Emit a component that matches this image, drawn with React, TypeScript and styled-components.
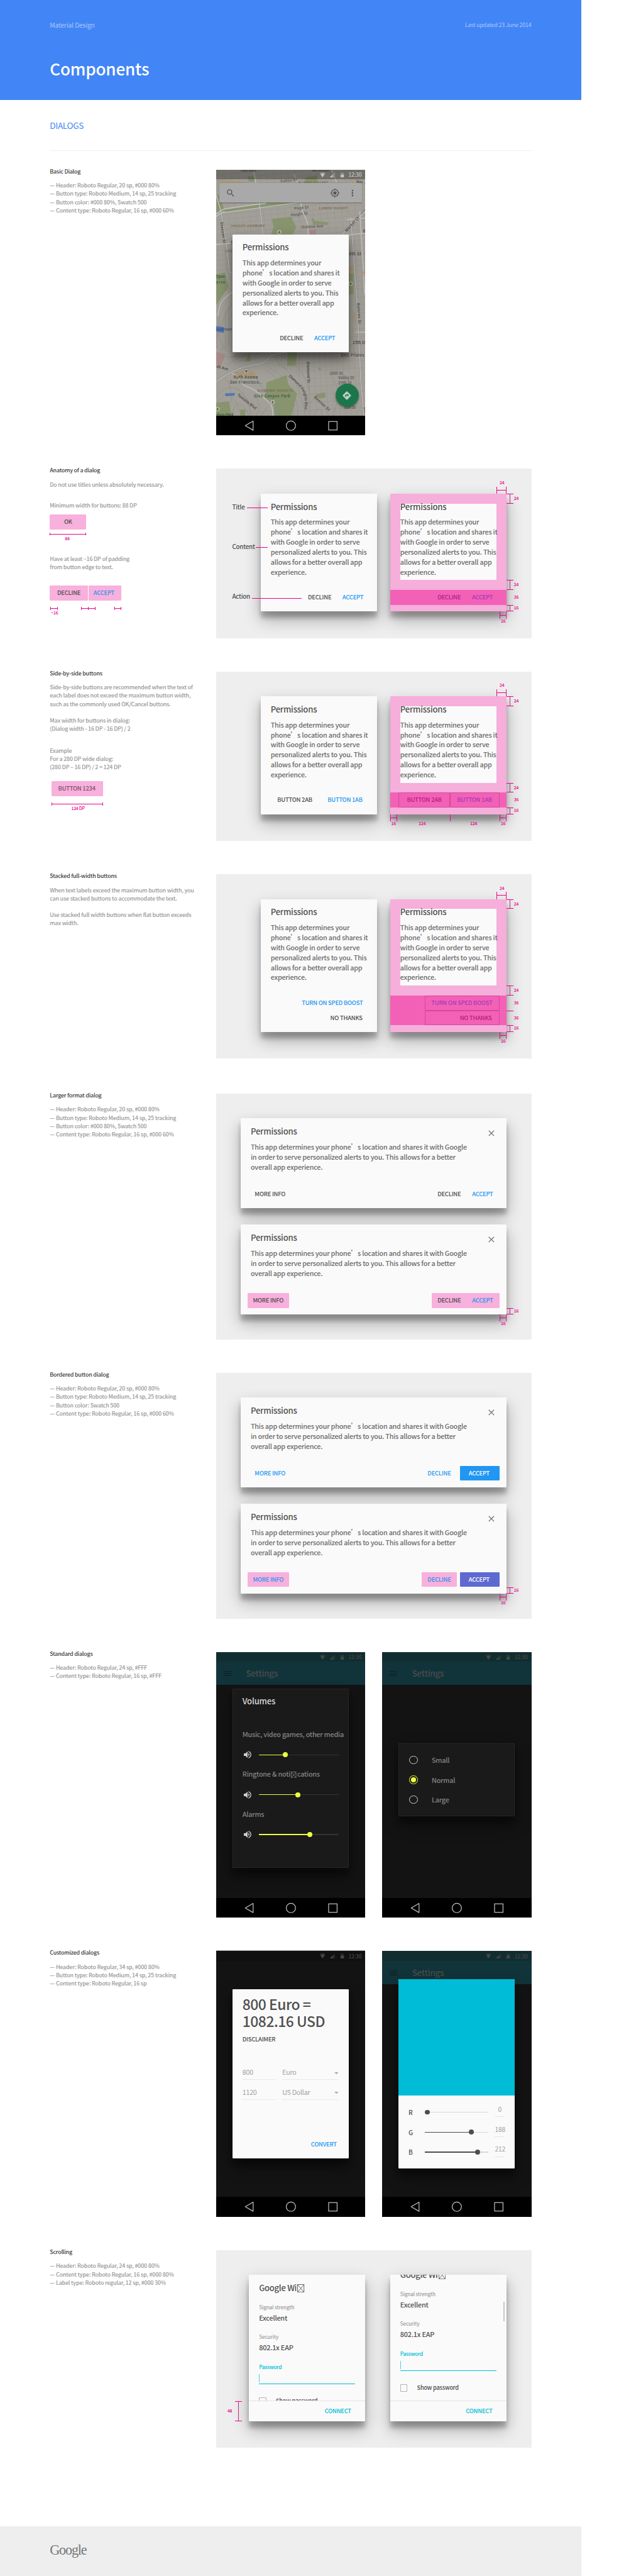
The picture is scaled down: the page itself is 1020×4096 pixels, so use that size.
import React from 'react';
import styled, { createGlobalStyle, css } from 'styled-components';
import {
  MdSearch,
  MdGpsFixed,
  MdMoreVert,
  MdDirections,
  MdVolumeUp,
  MdMenu,
  MdClose,
} from 'react-icons/md';

/* 1rem is ten units of the spec sheet grid */
const Global = createGlobalStyle`
  html { font-size: 6.6063px; }
  body { margin: 0; background: #fff; }
  * { box-sizing: border-box; }
  p, h1, h2, h3, ul { margin: 0; padding: 0; font-weight: inherit; }
  svg { display: block; }
`;

const PINK = '#ec008c';
const BLUE = '#2196f3';
const INK = '#4d4d4d';

const Page = styled.div`
  width: 154.4rem;
  height: 620rem;
  display: flex;
  flex-direction: column;
  align-items: flex-start;
  overflow: hidden;
  font-family: 'Noto Sans CJK SC', 'Noto Sans', sans-serif;
  font-weight: 500;
  letter-spacing: -0.035em;
  color: ${INK};
`;

/* ---------- page frame ---------- */

const Header = styled.header`
  width: 140rem;
  height: 24rem;
  padding: 4.96rem 12rem 0;
  background: #4285f6;
  color: #fff;
  display: flex;
  flex-direction: column;
  justify-content: flex-start;
`;
const HeaderRow = styled.div`
  display: flex;
  justify-content: space-between;
  color: #a9c8fb;
  line-height: 2rem;
  font-weight: 400;
  letter-spacing: -0.024em;
`;
const Product = styled.span`
  font-size: 1.56rem;
  position: relative;
  top: 0.05rem;
`;
const Updated = styled.span`
  font-size: 1.344rem;
`;
const PageTitle = styled.h1`
  font-size: 3.96rem;
  line-height: 5rem;
  margin-top: 7.15rem;
`;
const Chapter = styled.div`
  width: 116rem;
  height: 12.35rem;
  margin: 0 0 4.45rem 12rem;
  padding-top: 5.1rem;
  border-bottom: 1px solid #eee;
`;
const ChapterTitle = styled.h2`
  font-size: 2.05rem;
  font-weight: 400;
  letter-spacing: -0.024em;
  line-height: 2.2rem;
  color: #4285f6;
`;
const Sections = styled.main`
  display: flex;
  flex-direction: column;
  gap: 8rem;
  padding-left: 12rem;
`;
const Section = styled.section<{ $mt?: number }>`
  display: grid;
  grid-template-columns: 40rem 76rem;
  margin-top: ${(p) => p.$mt ?? 0}rem;
`;
const Aside = styled.div`
  margin-top: -0.58rem;
  height: 0;
  display: flex;
  flex-direction: column;
  align-items: flex-start;
  font-size: 1.357rem;
  line-height: 2rem;
  color: #999;
  white-space: nowrap;
  & > * {
    flex-shrink: 0;
  }
`;
const AsideTitle = styled.h3`
  font-size: 1.35rem;
  line-height: 2rem;
  color: #3d3d3d;
  margin-bottom: 1.4rem;
`;
const Note = styled.p<{ $gap?: number }>`
  line-height: 2rem;
  margin-top: ${(p) => p.$gap ?? 0}rem;
`;
const Footer = styled.footer`
  width: 140rem;
  height: 12rem;
  margin-top: auto;
  padding: 3.8rem 12rem 0;
  background: #eee;
`;
const Wordmark = styled.div`
  font-family: 'Liberation Serif', serif;
  font-size: 3.35rem;
  font-weight: 400;
  line-height: 4rem;
  letter-spacing: -0.052em;
  color: #777;
`;

/* ---------- dialogs ---------- */

const Stage = styled.div<{ $h: number }>`
  position: relative;
  height: ${(p) => p.$h}rem;
  background: #eee;
  overflow: hidden;
`;
const DialogRow = styled.div<{ $left: number; $gap: number }>`
  display: flex;
  gap: ${(p) => p.$gap}rem;
  padding: 6rem 0 0 ${(p) => p.$left}rem;
`;
const DialogStack = styled.div`
  display: flex;
  flex-direction: column;
  gap: 4rem;
  padding: 6rem 0 0 6rem;
`;
const raised = css`
  box-shadow: 0 1.5rem 1.2rem rgba(0, 0, 0, 0.24), 0 1.9rem 3.8rem rgba(0, 0, 0, 0.3);
`;
const Dialog = styled.div<{ $w?: number; $h: number; $marked?: boolean }>`
  width: ${(p) => p.$w ?? 28}rem;
  height: ${(p) => p.$h}rem;
  display: flex;
  flex-direction: column;
  padding: 2.4rem 0 1.6rem;
  border-radius: 0.2rem;
  background: ${(p) => (p.$marked ? '#f6aedb' : '#fafafa')};
  ${raised}
`;
const DialogText = styled.div<{ $fixed?: boolean }>`
  display: flex;
  flex-direction: column;
  margin: 0 2.4rem;
  height: ${(p) => (p.$fixed ? '18.4rem' : 'auto')};
  background: #fafafa;
`;
const TitleLine = styled.div`
  display: flex;
  justify-content: space-between;
  margin-top: -0.47rem;
  height: 2.4rem;
`;
const DialogTitle = styled.h3`
  font-size: 1.99rem;
  line-height: 2.4rem;
  color: #505050;
`;
const DialogBody = styled.p`
  margin-top: 1.36rem;
  font-size: 1.635rem;
  line-height: 2.4rem;
  color: #6c6c6c;
  white-space: nowrap;
`;
const Close = styled(MdClose)`
  width: 2.4rem;
  height: 2.4rem;
  margin: 0.5rem 0.1rem 0 0;
  color: #757575;
`;
const Actions = styled.div<{ $tinted?: boolean; $stacked?: boolean }>`
  margin-top: auto;
  padding: 0 1.6rem;
  display: flex;
  flex-direction: ${(p) => (p.$stacked ? 'column' : 'row')};
  align-items: ${(p) => (p.$stacked ? 'flex-end' : 'stretch')};
  justify-content: flex-end;
  background: ${(p) => (p.$tinted ? '#f361b7' : 'transparent')};
`;
const Spacer = styled.div`
  flex: 1;
`;

type ButtonProps = {
  $w: number;
  $tone?: string;
  $fill?: string;
  $nudge?: number;
  $ml?: number;
  $outlined?: boolean;
};
const Button = styled.div<ButtonProps>`
  width: ${(p) => p.$w}rem;
  height: 3.6rem;
  margin-left: ${(p) => p.$ml ?? 0}rem;
  padding-right: ${(p) => p.$nudge ?? 0}rem;
  border-radius: 0.2rem;
  background: ${(p) => p.$fill ?? 'transparent'};
  box-shadow: ${(p) => (p.$outlined ? 'inset 0 0 0 1px #d4479c' : 'none')};
  color: ${(p) => p.$tone ?? INK};
  font-size: 1.42rem;
  line-height: 3.6rem;
  text-align: center;
  white-space: nowrap;
`;
const EndButton = styled(Button)`
  padding-right: 1.9rem;
  text-align: right;
`;

/* ---------- measurement annotations ---------- */

const Across = styled.div<{ $x: number; $y: number; $w: number; $h: number; $bare?: boolean }>`
  position: absolute;
  left: ${(p) => p.$x}rem;
  top: ${(p) => p.$y}rem;
  width: ${(p) => p.$w}rem;
  height: ${(p) => p.$h}rem;
  border-left: 1px solid ${PINK};
  border-right: ${(p) => (p.$bare ? 'none' : `1px solid ${PINK}`)};
  &::before {
    content: '';
    position: absolute;
    left: 0;
    right: 0;
    top: calc(50% - 0.5px);
    height: 1px;
    background: ${PINK};
    display: ${(p) => (p.$bare ? 'none' : 'block')};
  }
`;
const Down = styled.div<{ $x: number; $y: number; $h: number }>`
  position: absolute;
  left: ${(p) => p.$x}rem;
  top: ${(p) => p.$y}rem;
  width: 1.7rem;
  height: ${(p) => p.$h}rem;
  border-top: 1px solid ${PINK};
  border-bottom: 1px solid ${PINK};
  &::before {
    content: '';
    position: absolute;
    left: calc(50% - 0.5px);
    top: 0;
    bottom: 0;
    width: 1px;
    background: #c4267f;
  }
`;
const Tick = styled.div<{ $x: number; $y: number; $w: number }>`
  position: absolute;
  left: ${(p) => p.$x}rem;
  top: ${(p) => p.$y}rem;
  width: ${(p) => p.$w}rem;
  height: 1px;
  background: ${PINK};
`;
const Figure = styled.span<{ $x: number; $y: number }>`
  position: absolute;
  left: ${(p) => p.$x - 3}rem;
  top: ${(p) => p.$y - 0.6}rem;
  width: 6rem;
  text-align: center;
  font-size: 1.04rem;
  line-height: 1.2rem;
  color: ${PINK};
`;
const PartLabel = styled.span<{ $y: number }>`
  position: absolute;
  left: 3.92rem;
  top: ${(p) => p.$y - 1.65}rem;
  font-size: 1.49rem;
  line-height: 2rem;
  color: #4d4d4d;
`;

const MarginTop = () => (
  <>
    <Across $x={67.6} $y={4.3} $w={2.4} $h={1.7} />
    <Figure $x={68.9} $y={3.45}>24</Figure>
    <Down $x={70} $y={6} $h={2.4} />
    <Figure $x={72.35} $y={7.2}>24</Figure>
  </>
);
const CornerMark = ({ y }: { y: number }) => (
  <>
    <Down $x={70} $y={y - 1.6} $h={1.6} />
    <Figure $x={72.35} $y={y - 0.85}>16</Figure>
    <Across $x={68.4} $y={y} $w={1.6} $h={1.7} />
    <Figure $x={69.2} $y={y + 2.3}>16</Figure>
  </>
);

/* measurement strip that sits below the sample buttons of the left column */
const Strip = styled.div<{ $h: number; $w: number; $ml?: number }>`
  position: relative;
  width: ${(p) => p.$w}rem;
  height: ${(p) => p.$h}rem;
  margin-left: ${(p) => p.$ml ?? 0}rem;
`;
const Samples = styled.div<{ $gap: number; $ml?: number }>`
  display: flex;
  gap: 0.1rem;
  margin: ${(p) => p.$gap}rem 0 0 ${(p) => p.$ml ?? 0}rem;
`;

const NarrowText = ({ fixed }: { fixed?: boolean }) => (
  <DialogText $fixed={fixed}>
    <TitleLine>
      <DialogTitle>Permissions</DialogTitle>
    </TitleLine>
    <DialogBody>
      This app determines your
      <br />
      phone’s location and shares it
      <br />
      with Google in order to serve
      <br />
      personalized alerts to you. This
      <br />
      allows for a better overall app
      <br />
      experience.
    </DialogBody>
  </DialogText>
);
const WideText = () => (
  <DialogText>
    <TitleLine>
      <DialogTitle>Permissions</DialogTitle>
      <Close />
    </TitleLine>
    <DialogBody>
      This app determines your phone’s location and shares it with Google
      <br />
      in order to serve personalized alerts to you. This allows for a better
      <br />
      overall app experience.
    </DialogBody>
  </DialogText>
);

/* ---------- phones ---------- */

const Phones = styled.div`
  display: flex;
  gap: 4rem;
`;
const Phone = styled.div<{ $edge?: boolean }>`
  position: relative;
  width: 36rem;
  height: 64rem;
  background: #131313;
  overflow: hidden;
  display: flex;
  flex-direction: column;
  box-shadow: ${(p) => (p.$edge ? '0 -1px 0 #aaa' : 'none')};
`;
const StatusBar = styled.div<{ $bg: string; $fg: string }>`
  position: relative;
  height: 2.4rem;
  flex: none;
  display: flex;
  align-items: center;
  justify-content: flex-end;
  gap: 1rem;
  padding-right: 0.9rem;
  background: ${(p) => p.$bg};
  color: ${(p) => p.$fg};
  font-size: 1.3rem;
  line-height: 2.3rem;
`;
const StatusIcons = styled.svg`
  width: 6rem;
  height: 1.4rem;
`;
const AppBar = styled.div`
  height: 5.6rem;
  flex: none;
  padding-left: 1.6rem;
  display: flex;
  align-items: center;
  gap: 3.25rem;
  background: #10343a;
  color: #4b4b4b;
  font-size: 2.04rem;
  line-height: 2.4rem;
`;
const MenuIcon = styled(MdMenu)`
  width: 2.4rem;
  height: 2.4rem;
  color: #0f2023;
`;
const Screen = styled.div`
  flex: 1;
`;
const NavBar = styled.div`
  position: relative;
  height: 4.8rem;
  flex: none;
  background: #000;
`;
const NavIcons = styled.svg`
  width: 36rem;
  height: 4.8rem;
`;
const Window = styled.div<{ $top: number; $h: number; $dark?: boolean }>`
  position: absolute;
  left: 4rem;
  top: ${(p) => p.$top}rem;
  width: 28rem;
  height: ${(p) => p.$h}rem;
  display: flex;
  flex-direction: column;
  border-radius: 0.2rem;
  background: ${(p) => (p.$dark ? '#1a1a1a' : '#fafafa')};
  box-shadow: ${(p) => (p.$dark ? 'inset 0 0 0 1px #262626, ' : '')} 0 1.5rem 1.2rem
      rgba(0, 0, 0, 0.24),
    0 1.9rem 3.8rem rgba(0, 0, 0, 0.45);
`;
const PhoneDialog = styled(Dialog)`
  position: absolute;
  left: 4rem;
  top: 15.6rem;
  box-shadow: 0 1.5rem 1.2rem rgba(0, 0, 0, 0.26), 0 1.9rem 3.8rem rgba(0, 0, 0, 0.4);
`;

const Status = ({ bg, fg, dim }: { bg: string; fg: string; dim: string }) => (
  <StatusBar $bg={bg} $fg={fg}>
    <StatusIcons viewBox="0 0 60 14">
      <path d="M1 3.5Q8 -2 15 3.5L8 13.5Z" fill={dim} />
      <path d="M3.2 6Q8 2.6 12.8 6L8 13.5Z" fill={fg} />
      <path d="M37.5 1.5V13.5H25.5Z" fill={dim} />
      <path d="M32.2 7V13.5H25.5Z" fill={fg} />
      <path d="M54 1.5H57V3H59.5V13.5H51.5V3H54Z" fill={dim} />
      <path d="M51.5 7.4H59.5V13.5H51.5Z" fill={fg} />
    </StatusIcons>
    12:30
  </StatusBar>
);
const Nav = () => (
  <NavBar>
    <NavIcons viewBox="0 0 360 48" fill="none" stroke="#c4c4c4" strokeWidth="1.8">
      <path d="M89 13V35L70 24Z" strokeLinejoin="round" />
      <circle cx="180" cy="24" r="11.2" />
      <rect x="270.9" y="14" width="20.4" height="20.4" />
    </NavIcons>
  </NavBar>
);

/* map */
const MapLayer = styled.svg`
  position: absolute;
  left: 0;
  top: 0;
  width: 36rem;
  height: 59.2rem;
  font-family: Roboto, sans-serif;
  letter-spacing: 0;
`;
const SearchCard = styled.div`
  position: relative;
  height: 4.8rem;
  margin: 0.8rem 0.8rem 0;
  padding: 0 1.1rem 0 1.6rem;
  display: flex;
  align-items: center;
  background: #a9a9a9;
  border-radius: 0.2rem;
  box-shadow: 0 0.1rem 0.2rem rgba(0, 0, 0, 0.35);
  color: #555;
  svg {
    width: 2.4rem;
    height: 2.4rem;
  }
`;
const SearchGap = styled.div`
  flex: 1;
`;
const Locate = styled(MdGpsFixed)`
  margin-right: 1.9rem;
`;
const Fab = styled.div`
  position: absolute;
  left: 28.8rem;
  top: 51.6rem;
  width: 5.6rem;
  height: 5.6rem;
  border-radius: 50%;
  background: #1d754c;
  color: #b9cfc4;
  display: grid;
  place-items: center;
  box-shadow: 0 0.3rem 0.5rem rgba(0, 0, 0, 0.35);
  svg {
    width: 2.4rem;
    height: 2.4rem;
  }
`;

const TreePin = ({ x, y }: { x: number; y: number }) => (
  <g transform={`translate(${x} ${y})`}>
    <circle r="6" fill="#b9b9b5" stroke="#77756e" strokeWidth=".8" />
    <path d="M0 -4L3.4 1.6H1V3.6H-1V1.6H-3.4Z" fill="#4f7a1a" />
  </g>
);
const FoodPin = ({ x, y }: { x: number; y: number }) => (
  <g transform={`translate(${x} ${y})`}>
    <circle r="6" fill="#b9b9b5" stroke="#77756e" strokeWidth=".8" />
    <path d="M-2.6 -3.5V-.6Q-2.6 .6 -1.4 .6Q-.2 .6 -.2 -.6V-3.5M-1.4 -3.5V4M2 4V-3.5Q3.6 -2 2 .4" stroke="#c96a10" strokeWidth="1" fill="none" />
  </g>
);

const MapView = () => (
  <MapLayer viewBox="0 0 360 592">
    <defs>
      <pattern id="blocks" width="17" height="12" patternUnits="userSpaceOnUse" patternTransform="rotate(-6)">
        <path d="M0 0H17M0 0V12" stroke="#8b8984" strokeWidth="1" fill="none" />
      </pattern>
      <pattern id="blocks2" width="14" height="19" patternUnits="userSpaceOnUse" patternTransform="rotate(-3)">
        <path d="M0 0H14M0 0V19" stroke="#8b8984" strokeWidth="1" fill="none" />
      </pattern>
      <path id="dhb" d="M174 498C192 512 206 526 211 540C215 552 214 562 212 580" />
    </defs>
    <rect width="360" height="592" fill="#a29f98" />
    <path d="M0 0H360V250H0Z" fill="url(#blocks)" />
    <path d="M150 250H360V592H200L215 500L150 470Z" fill="url(#blocks2)" />
    <g fill="none" stroke="#8b8984" strokeWidth=".9">
      <path d="M8 330C22 300 30 300 40 292M4 400C14 370 22 340 40 322M6 345V400L20 430H12V452M22 340V430M30 330V420" />
      <path d="M12 300Q22 288 36 286M12 318Q20 300 38 300" />
      <path d="M30 470C60 440 80 452 110 440S140 440 150 470M44 466C70 452 80 462 100 452M20 450C40 452 60 448 84 440" />
      <path d="M0 545C20 520 50 510 80 560M4 560C20 530 40 530 60 590M40 592C40 560 60 550 80 592M20 500Q40 520 36 560" />
      <path d="M84 592C80 560 70 545 50 525M96 592C110 570 100 560 96 545M108 592Q120 575 124 570" />
      <path d="M130 478C150 490 170 500 180 530C190 550 200 560 196 592M120 480C140 500 160 505 190 570M150 470C180 480 200 520 216 592M160 450C190 470 210 480 224 530M185 592C190 560 190 540 184 520" />
      <path d="M226 560C240 540 262 560 270 592M236 592C240 570 250 570 256 592M224 470V592M280 500C300 530 292 560 282 592M200 440V500M160 440Q150 470 170 480" />
    </g>
    <g fill="#87946e">
      <path d="M134 118L180 113L193 138L180 163H129L139 139Z" />
      <path d="M230 114L238 123L269 126V133L233 132Z" />
      <path d="M0 61H8L20 98L0 105Z" />
      <path d="M12 98L100 84L200 78V82L110 92L14 104Z" />
      <path d="M100 80L180 78L150 86Z" />
      <path d="M214 18L243 14L244 32H214ZM77 16H91L92 28H78Z" />
      <path d="M0 252L21 247L30 282L6 316L0 326Z" />
      <path d="M320 250H331V300H320Z" />
      <path d="M173 439H195L191 472H170ZM70 462L80 440L84 460Z" />
      <path d="M122 512L170 494L173 517L195 539L181 592H141L138 566L117 548Z" />
      <path d="M0 561L31 557L37 592H0ZM58 577H70V592H58ZM246 476H252V481H246ZM240 540L262 536L264 548L246 550Z" />
    </g>
    <path d="M7 24L76 30L20 36H7ZM45 485H90L98 501H42ZM320 232H331V250H320ZM330 345H336V364H330Z" fill="#a8977a" />
    <path d="M225 144H241V156H225ZM0 438L22 445L10 476L0 468ZM0 380H3V430H0Z" fill="#a58a88" />
    <path d="M0 376L19 379L18 393L0 389ZM22 538L45 537L44 544L22 545Z" fill="#5377b4" />
    <path d="M97 500C108 530 124 530 134 548S150 570 152 592" fill="none" stroke="#6d86b4" strokeWidth="1.2" />
    <g fill="none" stroke="#7f7d78" strokeWidth="3.6">
      <path d="M0 61L11 98L24 178L33 248H40M104 80L113 156M324 113L339 316L349 516L356 592M303 156L360 96" />
      <path d="M0 510C40 480 60 476 110 466C124 462 125 452 132 446L173 438" />
    </g>
    <g fill="none" stroke="#bdbdbb" strokeWidth="2.4">
      <path d="M0 61L11 98L24 178L33 248H40M90 0L104 80L113 156M324 113L339 316L349 516L356 592M303 156L360 99" />
      <path d="M0 106Q10 98 20 94L120 80M10 104L199 79M0 180L40 176M0 112L20 100" />
      <path d="M188 10L194 30M204 80C206 110 218 110 220 130L222 156M346 100L358 300" />
      <path d="M0 510C40 480 60 476 110 466C124 462 125 452 132 446L173 438" />
      <path d="M39 490L56 502C62 526 84 520 100 536C122 558 138 556 136 592M40 294C10 312 8 324 4 352" />
      <path d="M335 391H360M320 157L360 152M315 120L360 116M278 0L290 30" />
    </g>
    <g fontSize="9.5" fill="#4c4b48" fontWeight="500">
      <text x="57" y="4" fill="#5d5c58">Turk Blvd</text>
      <text x="231" y="4" fill="#5d5c58">McAllister</text>
      <text transform="translate(155 31) rotate(-6)" fill="#5d5c58" textLength="40">Fulton St</text>
      <text x="338" y="33" textLength="24">Bar J</text>
      <text transform="translate(188 96) rotate(-5)" fill="#5d5c58" textLength="35">Page St</text>
      <text transform="translate(180 112) rotate(-6)" fill="#5d5c58" textLength="41">Haight St</text>
      <text transform="translate(206 141) rotate(-3)" fill="#5d5c58" textLength="52">Duboce Ave</text>
      <text transform="translate(314 150) rotate(-47)" textLength="46">Market St</text>
      <text transform="translate(10 126) rotate(82)" textLength="52">Stanyan St</text>
      <text x="36" y="178">F</text>
      <text x="354" y="151">B</text>
      <text x="320" y="206" textLength="29">6th St</text>
      <text x="358" y="204">L</text>
      <text transform="translate(339 321) rotate(86)" textLength="50">Dolores St</text>
      <text x="329" y="419" textLength="31">25th St</text>
      <text x="301" y="450" textLength="56">EHS Pilates</text>
      <text transform="translate(0 476) rotate(14)" textLength="29">de Ave</text>
      <text transform="translate(218 462) rotate(88)" textLength="51">Diamond St</text>
      <text x="42" y="503" textLength="58">Ruth Asawa</text>
      <text x="33" y="515" textLength="77">San Francisco…</text>
      <text x="273" y="493" fill="#5d5c58" textLength="32">28th St</text>
      <text x="294" y="504" fill="#5d5c58" textLength="38">Valley St</text>
      <text x="294" y="516" fill="#5d5c58" textLength="32">29th St</text>
      <text x="308" y="575" fill="#5d5c58">Gull St</text>
      <text transform="translate(50 543) rotate(38)" textLength="56">Teresita Blvd</text>
      <text transform="translate(235 548) rotate(43)" textLength="48">Beacon St</text>
      <text>
        <textPath href="#dhb" textLength="94">Diamond Heights Blvd</textPath>
      </text>
      <text transform="translate(355 572) rotate(80)">Dolores</text>
    </g>
    <g fontSize="8.6" fill="#7c6a50" fontWeight="500">
      <text x="198" y="33" textLength="72">ALAMO SQUARE</text>
      <text x="248" y="95.7" textLength="69">LOWER HAIGHT</text>
      <text x="36" y="138" textLength="81">HAIGHT-ASHBURY</text>
      <text x="22" y="199" textLength="17">COL</text>
      <text x="99" y="534.5" textLength="86">DIAMOND HEIGHTS</text>
    </g>
    <g fontSize="9.5" fill="#3c5a3a" fontStyle="italic" fontWeight="500">
      <text x="-1" y="261" textLength="22">Open</text>
      <text x="0" y="274" textLength="22">erve</text>
      <text x="91" y="548" textLength="87">Glen Canyon Park</text>
      <text x="0" y="594">dson Park</text>
      <text x="0" y="387" fill="#44567c" textLength="38">leservoir</text>
    </g>
    <TreePin x={152} y={150} />
    <TreePin x={324} y={274} />
    <TreePin x={136} y={559} />
    <TreePin x={3.5} y={576} />
    <FoodPin x={329} y={30} />
    <FoodPin x={358} y={250} />
    <g transform="translate(72.6 485)">
      <circle r="6" fill="#b9b9b5" stroke="#77756e" strokeWidth=".8" />
      <path d="M-4 -.8L0 -3L4 -.8L0 1.2ZM-2 1H2V3H-2Z" fill="#7a4030" />
    </g>
  </MapLayer>
);

/* missing-glyph box of the font's ligature */
const GlyphBox = styled.svg<{ $w: number; $h: number }>`
  display: inline-block;
  width: ${(p) => p.$w}rem;
  height: ${(p) => p.$h}rem;
  margin: 0 0.15rem 0 0.2rem;
  vertical-align: -0.16em;
`;
const Missing = ({ w, h }: { w: number; h: number }) => (
  <GlyphBox $w={w} $h={h} viewBox={`0 0 ${w * 10} ${h * 10}`} fill="none" stroke="currentColor" strokeWidth="1.3">
    <path
      d={`M.8 .8H${w * 10 - 0.8}V${h * 10 - 0.8}H.8ZM.8 .8L${w * 10 - 0.8} ${h * 10 - 0.8}M${w * 10 - 0.8} .8L.8 ${h * 10 - 0.8}`}
    />
  </GlyphBox>
);

/* sliders */
const Track = styled.div<{ $w: number; $base: string }>`
  position: relative;
  width: ${(p) => p.$w}rem;
  height: 0.2rem;
  background: ${(p) => p.$base};
`;
const Filled = styled.div<{ $ink: string; $to: number }>`
  width: ${(p) => p.$to}rem;
  height: 0.2rem;
  background: ${(p) => p.$ink};
  &::after {
    content: '';
    position: absolute;
    left: ${(p) => p.$to - 0.6}rem;
    top: -0.5rem;
    width: 1.2rem;
    height: 1.2rem;
    border-radius: 50%;
    background: ${(p) => p.$ink};
  }
`;
const VolumeTitle = styled.h3`
  margin: 1.83rem 2.4rem 5.66rem;
  font-size: 1.99rem;
  line-height: 2.4rem;
  color: #d8d8d8;
`;
const Volume = styled.div`
  height: 9.6rem;
  padding: 0 2.4rem;
`;
const VolumeName = styled.p`
  font-size: 1.635rem;
  line-height: 2.4rem;
  color: #848484;
  white-space: nowrap;
`;
const VolumeRow = styled.div`
  display: flex;
  align-items: center;
  gap: 1.6rem;
  margin-top: 2.5rem;
  height: 2.4rem;
  color: #cfcfcf;
  svg {
    width: 2.4rem;
    height: 2.4rem;
  }
`;

/* radio list */
const Options = styled(Window)`
  padding: 1.6rem 2.6rem;
`;
const Option = styled.div`
  height: 4.8rem;
  display: flex;
  align-items: center;
  gap: 3.4rem;
  font-size: 1.635rem;
  line-height: 2.2rem;
  color: #848484;
`;
const Radio = styled.span<{ $on?: boolean }>`
  width: 2rem;
  height: 2rem;
  border-radius: 50%;
  border: 0.2rem solid ${(p) => (p.$on ? '#eeff41' : '#cfcfcf')};
  display: grid;
  place-items: center;
  &::after {
    content: '';
    width: 1.1rem;
    height: 1.1rem;
    border-radius: 50%;
    background: ${(p) => (p.$on ? '#eeff41' : 'transparent')};
  }
`;

/* currency converter */
const Amount = styled.h3`
  margin: 1.5rem 2.4rem 0;
  font-size: 3.46rem;
  line-height: 4.05rem;
  letter-spacing: -0.021em;
  color: #505050;
`;
const Disclaimer = styled.p`
  margin: 1.5rem 2.4rem 0;
  font-size: 1.42rem;
  line-height: 2rem;
`;
const Fields = styled.div`
  display: grid;
  grid-template-columns: 8rem 13.6rem;
  column-gap: 1.6rem;
  row-gap: 1.6rem;
  margin: 5.55rem 2.4rem 0;
`;
const Field = styled.div`
  height: 3.2rem;
  display: flex;
  justify-content: space-between;
  align-items: flex-start;
  border-bottom: 1px solid #e9e9e9;
  font-size: 1.62rem;
  font-weight: 400;
  letter-spacing: -0.024em;
  line-height: 2.8rem;
  color: #a0a0a0;
`;
const Caret = styled.svg`
  width: 1rem;
  height: 0.5rem;
  margin-top: 1.3rem;
`;
const Convert = styled.p`
  margin: auto 2.9rem 1.6rem auto;
  font-size: 1.42rem;
  line-height: 3.6rem;
  color: ${BLUE};
`;

/* colour picker */
const Swatch = styled.div`
  height: 28rem;
  background: #00bcd6;
  border-radius: 0.2rem 0.2rem 0 0;
`;
const Channels = styled.div`
  padding: 1.6rem 2.4rem;
`;
const Channel = styled.div`
  height: 4.8rem;
  display: grid;
  grid-template-columns: 4rem 16.8rem 2.4rem;
  align-items: center;
  font-size: 1.6rem;
  color: #4d4d4d;
`;
const ChannelName = styled.span`
  font-size: 1.55rem;
  line-height: 2rem;
`;
const ChannelValue = styled.span`
  height: 2.6rem;
  margin-top: -0.3rem;
  border-bottom: 1px solid #e6e6e6;
  font-size: 1.56rem;
  font-weight: 400;
  line-height: 1.6rem;
  text-align: center;
  color: #a0a0a0;
`;

/* scrolling form */
const FormDialog = styled.div`
  position: relative;
  width: 28rem;
  height: 35.2rem;
  display: flex;
  flex-direction: column;
  border-radius: 0.2rem;
  background: #fafafa;
  ${raised}
`;
const FormView = styled.div`
  height: 30.4rem;
  overflow: hidden;
  border-bottom: 1px solid #e4e4e4;
`;
const Form = styled.div<{ $scrolled?: boolean }>`
  margin-top: ${(p) => (p.$scrolled ? -3.2 : 0)}rem;
  padding: 1.88rem 2.4rem 0;
  display: flex;
  flex-direction: column;
`;
const FormTitle = styled.h3`
  font-size: 1.99rem;
  line-height: 2.4rem;
  height: 2.4rem;
  letter-spacing: -0.025em;
  color: #505050;
`;
const Label = styled.span<{ $active?: boolean; $mt: number }>`
  margin-top: ${(p) => p.$mt}rem;
  font-size: 1.25rem;
  line-height: 1.8rem;
  color: ${(p) => (p.$active ? '#00bcd4' : '#9e9e9e')};
`;
const Value = styled.span`
  margin-top: 0.65rem;
  font-size: 1.65rem;
  line-height: 2rem;
  color: #505050;
`;
const Input = styled.div`
  height: 2.4rem;
  margin-top: 0.8rem;
  border-bottom: 0.2rem solid #00bcd4;
  &::before {
    content: '';
    display: block;
    width: 1px;
    height: 2rem;
    background: #4fd0df;
  }
`;
const CheckRow = styled.div`
  display: flex;
  align-items: center;
  gap: 2.3rem;
  height: 2.4rem;
  margin-top: 2.9rem;
  font-size: 1.4rem;
  line-height: 1.8rem;
`;
const Box = styled.span`
  width: 1.75rem;
  height: 1.75rem;
  border: 0.2rem solid #b4b4b4;
  border-radius: 0.1rem;
`;
const Connect = styled.p`
  margin: 0 3.4rem 0 auto;
  font-size: 1.42rem;
  line-height: 4.7rem;
  color: #00bcd4;
`;
const ScrollThumb = styled.div`
  position: absolute;
  left: 27.2rem;
  top: 6.4rem;
  width: 0.4rem;
  height: 4.8rem;
  background: #c8c8c8;
`;

const TealStatus = () => <Status bg="#112d30" fg="#474747" dim="#243c3e" />;
const SettingsBar = () => (
  <AppBar>
    <MenuIcon />
    Settings
  </AppBar>
);
const VolumeItem = ({ name, to }: { name: React.ReactNode; to: number }) => (
  <Volume>
    <VolumeName>{name}</VolumeName>
    <VolumeRow>
      <MdVolumeUp />
      <Track $w={19.2} $base="#333">
        <Filled $ink="#eeff41" $to={to} />
      </Track>
    </VolumeRow>
  </Volume>
);
const ChannelItem = ({ name, to, value }: { name: string; to: number; value: number }) => (
  <Channel>
    <ChannelName>{name}</ChannelName>
    <Track $w={15.2} $base="#d8d8d8">
      <Filled $ink="#4d4d4d" $to={to} />
    </Track>
    <ChannelValue>{value}</ChannelValue>
  </Channel>
);
const Arrow = () => (
  <Caret viewBox="0 0 10 5">
    <path d="M0 0H10L5 5Z" fill="#aaa" />
  </Caret>
);
const WifiForm = ({ scrolled }: { scrolled?: boolean }) => (
  <FormDialog>
    <FormView>
      <Form $scrolled={scrolled}>
        <FormTitle>
          Google Wi
          <Missing w={1.7} h={2} />
        </FormTitle>
        <Label $mt={2.57}>Signal strength</Label>
        <Value>Excellent</Value>
        <Label $mt={2.75}>Security</Label>
        <Value>802.1x EAP</Value>
        <Label $mt={2.75} $active>Password</Label>
        <Input />
        <CheckRow>
          <Box />
          Show password
        </CheckRow>
      </Form>
    </FormView>
    {scrolled && <ScrollThumb />}
    <Connect>CONNECT</Connect>
  </FormDialog>
);

const SWATCH = '#f8b0dc';
const DARK_PINK = '#ad2180';
const PURPLE = '#a43bb6';

export default function App() {
  return (
    <Page>
      <Global />
      <Header>
        <HeaderRow>
          <Product>Material Design</Product>
          <Updated>Last updated 23 June 2014</Updated>
        </HeaderRow>
        <PageTitle>Components</PageTitle>
      </Header>
      <Chapter>
        <ChapterTitle>DIALOGS</ChapterTitle>
      </Chapter>

      <Sections>
        <Section>
          <Aside>
            <AsideTitle>Basic Dialog</AsideTitle>
            <Note>— Header: Roboto Regular, 20 sp, #000 80%</Note>
            <Note>— Button type: Roboto Medium, 14 sp, 25 tracking</Note>
            <Note>— Button color: #000 80%, Swatch 500</Note>
            <Note>— Content type: Roboto Regular, 16 sp, #000 60%</Note>
          </Aside>
          <Phone>
            <MapView />
            <Status bg="rgba(0,0,0,.3)" fg="#c6c5c3" dim="#918f8b" />
            <SearchCard>
              <MdSearch />
              <SearchGap />
              <Locate />
              <MdMoreVert />
            </SearchCard>
            <Screen />
            <PhoneDialog $h={28.4}>
              <NarrowText />
              <Actions>
                <Button $w={8.4}>DECLINE</Button>
                <Button $w={8} $nudge={0.4} $tone={BLUE}>ACCEPT</Button>
              </Actions>
            </PhoneDialog>
            <Fab>
              <MdDirections />
            </Fab>
            <Nav />
          </Phone>
        </Section>

        <Section>
          <Aside>
            <AsideTitle>Anatomy of a dialog</AsideTitle>
            <Note>Do not use titles unless absolutely necessary.</Note>
            <Note $gap={3}>Minimum width for buttons: 88 DP</Note>
            <Samples $gap={1.18}>
              <Button $w={8.8} $fill={SWATCH}>OK</Button>
            </Samples>
            <Strip $w={8.8} $h={6.05}>
              <Across $x={0} $y={0.8} $w={8.8} $h={0.7} />
              <Figure $x={4.2} $y={2.3}>88</Figure>
            </Strip>
            <Note>Have at least ~16 DP of padding</Note>
            <Note>from button edge to text.</Note>
            <Samples $gap={3.45}>
              <Button $w={9.2} $fill={SWATCH}>DECLINE</Button>
              <Button $w={7.9} $nudge={0.4} $fill={SWATCH} $tone={BLUE}>ACCEPT</Button>
            </Samples>
            <Strip $w={17.2} $h={5}>
              <Across $x={0.15} $y={1.6} $w={1.8} $h={0.7} />
              <Across $x={7.5} $y={1.6} $w={1.8} $h={0.7} />
              <Across $x={9.2} $y={1.6} $w={1.8} $h={0.7} />
              <Across $x={15.5} $y={1.6} $w={1.7} $h={0.7} />
              <Figure $x={1.15} $y={3.1}>~16</Figure>
            </Strip>
          </Aside>
          <Stage $h={40.8}>
            <DialogRow $left={10.8} $gap={3.2}>
              <Dialog $h={28.4}>
                <NarrowText />
                <Actions>
                  <Button $w={8.4}>DECLINE</Button>
                  <Button $w={8} $nudge={0.4} $tone={BLUE}>ACCEPT</Button>
                </Actions>
              </Dialog>
              <Dialog $h={28.4} $marked>
                <NarrowText fixed />
                <Actions $tinted>
                  <Button $w={8.4} $tone={DARK_PINK}>DECLINE</Button>
                  <Button $w={8} $nudge={0.4} $tone={PURPLE}>ACCEPT</Button>
                </Actions>
              </Dialog>
            </DialogRow>
            <PartLabel $y={9.9}>Title</PartLabel>
            <PartLabel $y={19.45}>Content</PartLabel>
            <PartLabel $y={31.45}>Action</PartLabel>
            <Tick $x={7.5} $y={9.3} $w={5} />
            <Tick $x={9.6} $y={18.9} $w={2.9} />
            <Tick $x={8.7} $y={31.1} $w={12} />
            <MarginTop />
            <Down $x={70} $y={26.8} $h={2.4} />
            <Figure $x={72.35} $y={28}>24</Figure>
            <Figure $x={72.35} $y={31}>36</Figure>
            <CornerMark y={34.4} />
          </Stage>
        </Section>

        <Section>
          <Aside>
            <AsideTitle>Side-by-side buttons</AsideTitle>
            <Note>Side-by-side buttons are recommended when the text of</Note>
            <Note>each label does not exceed the maximum button width,</Note>
            <Note>such as the commonly used OK/Cancel buttons.</Note>
            <Note $gap={2}>Max width for buttons in dialog:</Note>
            <Note>(Dialog width - 16 DP - 16 DP) / 2</Note>
            <Note $gap={3.2}>Example</Note>
            <Note>For a 280 DP wide dialog:</Note>
            <Note>(280 DP – 16 DP) / 2 = 124 DP</Note>
            <Samples $gap={2.38} $ml={0.43}>
              <Button $w={12.35} $fill={SWATCH} $tone="#7a5168" $nudge={0.2}>BUTTON 1234</Button>
            </Samples>
            <Strip $w={12.35} $h={5} $ml={0.43}>
              <Across $x={0} $y={1.6} $w={12.35} $h={0.7} />
              <Figure $x={6.35} $y={3}>124 DP</Figure>
            </Strip>
          </Aside>
          <Stage $h={40.8}>
            <DialogRow $left={10.8} $gap={3.2}>
              <Dialog $h={28.4}>
                <NarrowText />
                <Actions>
                  <Button $w={12.4}>BUTTON 2AB</Button>
                  <Button $w={12} $tone={BLUE} $nudge={0.2}>BUTTON 1AB</Button>
                </Actions>
              </Dialog>
              <Dialog $h={28.4} $marked>
                <NarrowText fixed />
                <Actions $tinted>
                  <Button $w={12.4} $tone={DARK_PINK} $outlined>BUTTON 2AB</Button>
                  <Button $w={12} $tone={PURPLE} $nudge={0.2} $outlined>BUTTON 1AB</Button>
                </Actions>
              </Dialog>
            </DialogRow>
            <MarginTop />
            <Down $x={70} $y={26.8} $h={2.4} />
            <Figure $x={72.35} $y={28}>24</Figure>
            <Figure $x={72.35} $y={31}>36</Figure>
            <CornerMark y={34.4} />
            <Across $x={42} $y={34.4} $w={1.6} $h={1.7} />
            <Figure $x={42.8} $y={36.7}>16</Figure>
            <Across $x={56.45} $y={34.4} $w={0.2} $h={1.7} $bare />
            <Figure $x={49.7} $y={36.7}>124</Figure>
            <Figure $x={62.1} $y={36.7}>124</Figure>
          </Stage>
        </Section>

        <Section>
          <Aside>
            <AsideTitle>Stacked full-width buttons</AsideTitle>
            <Note>When text labels exceed the maximum button width, you</Note>
            <Note>can use stacked buttons to accommodate the text.</Note>
            <Note $gap={2}>Use stacked full width buttons when flat button exceeds</Note>
            <Note>max width.</Note>
          </Aside>
          <Stage $h={44.4}>
            <DialogRow $left={10.8} $gap={3.2}>
              <Dialog $h={32}>
                <NarrowText />
                <Actions $stacked>
                  <Button $w={18} $nudge={0.3} $tone={BLUE}>TURN ON SPED BOOST</Button>
                  <EndButton $w={18}>NO THANKS</EndButton>
                </Actions>
              </Dialog>
              <Dialog $h={32} $marked>
                <NarrowText fixed />
                <Actions $tinted $stacked>
                  <Button $w={18} $nudge={0.3} $tone={PURPLE} $outlined>TURN ON SPED BOOST</Button>
                  <EndButton $w={18} $tone={DARK_PINK} $outlined>NO THANKS</EndButton>
                </Actions>
              </Dialog>
            </DialogRow>
            <MarginTop />
            <Down $x={70} $y={26.8} $h={2.4} />
            <Figure $x={72.35} $y={28}>24</Figure>
            <Figure $x={72.35} $y={31}>36</Figure>
            <Tick $x={70} $y={32.8} $w={1.7} />
            <Figure $x={72.35} $y={34.6}>36</Figure>
            <CornerMark y={38} />
          </Stage>
        </Section>

        <Section $mt={0.4}>
          <Aside>
            <AsideTitle>Larger format dialog</AsideTitle>
            <Note>— Header: Roboto Regular, 20 sp, #000 80%</Note>
            <Note>— Button type: Roboto Medium, 14 sp, 25 tracking</Note>
            <Note>— Button color: #000 80%, Swatch 500</Note>
            <Note>— Content type: Roboto Regular, 16 sp, #000 60%</Note>
          </Aside>
          <Stage $h={59.2}>
            <DialogStack>
              <Dialog $w={64} $h={21.6}>
                <WideText />
                <Actions>
                  <Button $w={10} $ml={0.45}>MORE INFO</Button>
                  <Spacer />
                  <Button $w={8.4}>DECLINE</Button>
                  <Button $w={7.9} $ml={0.1} $nudge={0.4} $tone={BLUE}>ACCEPT</Button>
                </Actions>
              </Dialog>
              <Dialog $w={64} $h={21.6}>
                <WideText />
                <Actions>
                  <Button $w={10} $fill={SWATCH}>MORE INFO</Button>
                  <Spacer />
                  <Button $w={8.4} $fill={SWATCH}>DECLINE</Button>
                  <Button $w={7.9} $ml={0.1} $nudge={0.4} $fill={SWATCH} $tone={BLUE}>ACCEPT</Button>
                </Actions>
              </Dialog>
            </DialogStack>
            <CornerMark y={53.2} />
          </Stage>
        </Section>

        <Section>
          <Aside>
            <AsideTitle>Bordered button dialog</AsideTitle>
            <Note>— Header: Roboto Regular, 20 sp, #000 80%</Note>
            <Note>— Button type: Roboto Medium, 14 sp, 25 tracking</Note>
            <Note>— Button color: Swatch 500</Note>
            <Note>— Content type: Roboto Regular, 16 sp, #000 60%</Note>
          </Aside>
          <Stage $h={59.2}>
            <DialogStack>
              <Dialog $w={64} $h={21.6}>
                <WideText />
                <Actions>
                  <Button $w={10} $ml={0.45} $tone={BLUE}>MORE INFO</Button>
                  <Spacer />
                  <Button $w={8.4} $tone={BLUE}>DECLINE</Button>
                  <Button $w={9.6} $ml={0.8} $nudge={0.4} $fill={BLUE} $tone="#fff">ACCEPT</Button>
                </Actions>
              </Dialog>
              <Dialog $w={64} $h={21.6}>
                <WideText />
                <Actions>
                  <Button $w={10} $fill={SWATCH} $tone={BLUE}>MORE INFO</Button>
                  <Spacer />
                  <Button $w={8.4} $fill={SWATCH} $tone={BLUE}>DECLINE</Button>
                  <Button $w={9.6} $ml={0.8} $nudge={0.4} $fill="#5e6ad2" $tone="#fff">ACCEPT</Button>
                </Actions>
              </Dialog>
            </DialogStack>
            <CornerMark y={53.2} />
          </Stage>
        </Section>

        <Section>
          <Aside>
            <AsideTitle>Standard dialogs</AsideTitle>
            <Note>— Header: Roboto Regular, 24 sp, #FFF</Note>
            <Note>— Content type: Roboto Regular, 16 sp, #FFF</Note>
          </Aside>
          <Phones>
            <Phone>
              <TealStatus />
              <SettingsBar />
              <Screen />
              <Window $top={8.8} $h={43.2} $dark>
                <VolumeTitle>Volumes</VolumeTitle>
                <VolumeItem name="Music, video games, other media" to={6.3} />
                <VolumeItem name={<>Ringtone &amp; noti<Missing w={1.3} h={1.6} />cations</>} to={9.3} />
                <VolumeItem name="Alarms" to={12.3} />
              </Window>
              <Nav />
            </Phone>
            <Phone>
              <TealStatus />
              <SettingsBar />
              <Screen />
              <Options $top={22} $h={17.6} $dark>
                <Option><Radio />Small</Option>
                <Option><Radio $on />Normal</Option>
                <Option><Radio />Large</Option>
              </Options>
              <Nav />
            </Phone>
          </Phones>
        </Section>

        <Section>
          <Aside>
            <AsideTitle>Customized dialogs</AsideTitle>
            <Note>— Header: Roboto Regular, 34 sp, #000 80%</Note>
            <Note>— Button type: Roboto Medium, 14 sp, 25 tracking</Note>
            <Note>— Content type: Roboto Regular, 16 sp</Note>
          </Aside>
          <Phones>
            <Phone $edge>
              <Status bg="#101010" fg="#474747" dim="#2b2b2b" />
              <Screen />
              <Window $top={9.2} $h={40.8}>
                <Amount>
                  800 Euro =
                  <br />
                  1082.16 USD
                </Amount>
                <Disclaimer>DISCLAIMER</Disclaimer>
                <Fields>
                  <Field>800</Field>
                  <Field>Euro<Arrow /></Field>
                  <Field>1120</Field>
                  <Field>US Dollar<Arrow /></Field>
                </Fields>
                <Convert>CONVERT</Convert>
              </Window>
              <Nav />
            </Phone>
            <Phone>
              <TealStatus />
              <SettingsBar />
              <Screen />
              <Window $top={6.8} $h={45.6}>
                <Swatch />
                <Channels>
                  <ChannelItem name="R" to={0.6} value={0} />
                  <ChannelItem name="G" to={11.2} value={188} />
                  <ChannelItem name="B" to={12.6} value={212} />
                </Channels>
              </Window>
              <Nav />
            </Phone>
          </Phones>
        </Section>

        <Section>
          <Aside>
            <AsideTitle>Scrolling</AsideTitle>
            <Note>— Header: Roboto Regular, 24 sp, #000 80%</Note>
            <Note>— Content type: Roboto Regular, 16 sp, #000 80%</Note>
            <Note>— Label type: Roboto regular, 12 sp, #000 30%</Note>
          </Aside>
          <Stage $h={47.6}>
            <DialogRow $left={8} $gap={6}>
              <WifiForm />
              <WifiForm scrolled />
            </DialogRow>
            <Down $x={4.65} $y={36.4} $h={4.8} />
            <Figure $x={3.35} $y={38.7}>48</Figure>
          </Stage>
        </Section>
      </Sections>

      <Footer>
        <Wordmark>Google</Wordmark>
      </Footer>
    </Page>
  );
}
